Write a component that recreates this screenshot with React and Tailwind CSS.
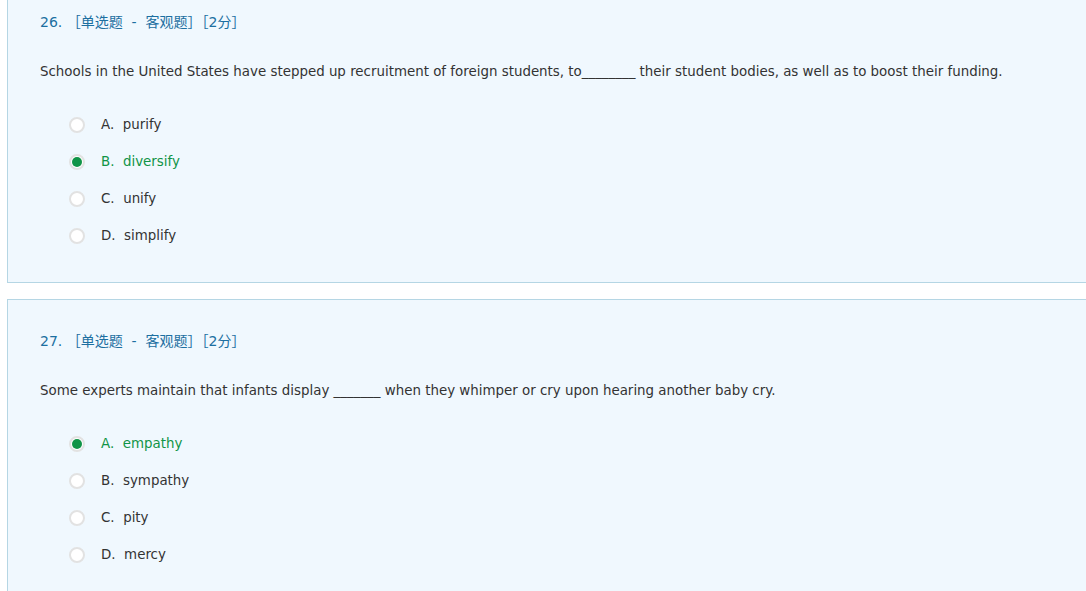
import React from 'react';

const questions = [
    {
        no: 26,
        text: 'Schools in the United States have stepped up recruitment of foreign students, to________ their student bodies, as well as to boost their funding.',
        options: [
            { key: 'A', label: 'purify' },
            { key: 'B', label: 'diversify' },
            { key: 'C', label: 'unify' },
            { key: 'D', label: 'simplify' },
        ],
        answer: 'B',
    },
    {
        no: 27,
        text: 'Some experts maintain that infants display _______ when they whimper or cry upon hearing another baby cry.',
        options: [
            { key: 'A', label: 'empathy' },
            { key: 'B', label: 'sympathy' },
            { key: 'C', label: 'pity' },
            { key: 'D', label: 'mercy' },
        ],
        answer: 'A',
    },
];

function Radio({ checked }) {
    return (
        <span className="flex h-[16px] w-[16px] shrink-0 items-center justify-center rounded-full border-[2px] border-[#e2e2e2] bg-white">
            {checked && <span className="h-[10px] w-[10px] rounded-full bg-[#109447]" />}
        </span>
    );
}

function QuestionCard({ q, first }) {
    return (
        <div
            className={`border-y border-l border-[#b5d6e4] bg-[#f0f8fe] pl-[32px] pt-[33px] pb-[38px] ${first ? '-mt-[20px]' : 'mt-[16px]'}`}
        >
            {/* Header */}
            <div className="h-[16px] whitespace-pre text-[14px] leading-[16px] text-[#1c6fa1]">
                {`${q.no}. ［单选题  -  客观题］［2分］`}
            </div>

            {/* Question */}
            <div className="mt-[34px] h-[16px] whitespace-pre text-[13.4px] leading-[16px] text-[#333]">{q.text}</div>

            {/* Options */}
            <div className="mt-[37px] flex flex-col gap-[21px] pl-[29px]">
                {q.options.map((o) => {
                    const checked = o.key === q.answer;
                    return (
                        <label key={o.key} className="flex h-[16px] items-center">
                            <Radio checked={checked} />
                            <span className={`ml-[16px] text-[13.4px] leading-[16px] ${checked ? 'text-[#109447]' : 'text-[#333]'}`}>
                                {o.key}.&nbsp;&nbsp;{o.label}
                            </span>
                        </label>
                    );
                })}
            </div>
        </div>
    );
}

export default function App() {
    return (
        <div
            className="h-[591px] overflow-hidden bg-white pl-[7px]"
            style={{ fontFamily: '"DejaVu Sans", "Noto Sans CJK SC", sans-serif' }}
        >
            {questions.map((q, i) => (
                <QuestionCard key={q.no} q={q} first={i === 0} />
            ))}
        </div>
    );
}
